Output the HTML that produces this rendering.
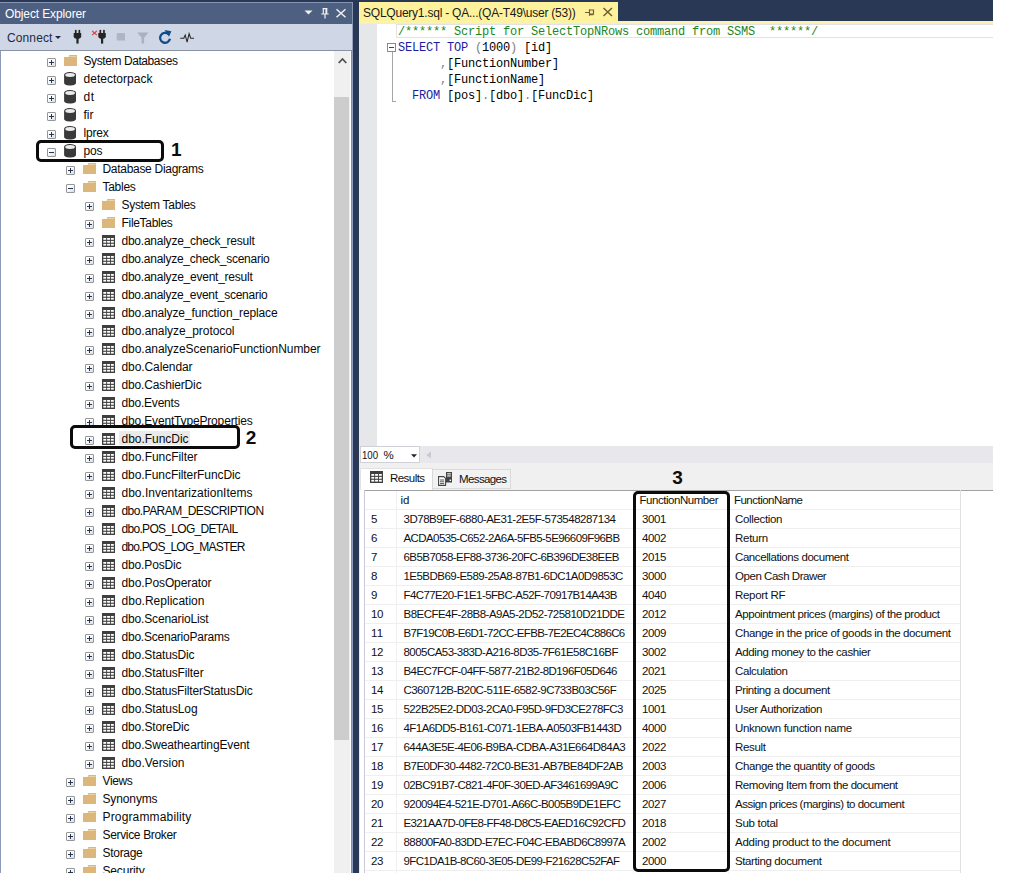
<!DOCTYPE html>
<html><head><meta charset="utf-8"><title>SSMS</title>
<style>
html,body{margin:0;padding:0;background:#fff;}
body{width:1023px;height:873px;position:relative;overflow:hidden;font-family:"Liberation Sans",sans-serif;font-size:12px;color:#000;}
.a{position:absolute;}
.t{position:absolute;white-space:pre;font-size:12px;line-height:17px;height:18px;color:#0a0a0a;}
.g{position:absolute;white-space:pre;font-size:11.5px;line-height:19px;height:19px;color:#111;}
.ex{position:absolute;width:7px;height:7px;border:1px solid #969696;background:linear-gradient(135deg,#ffffff 30%,#d9dde8 100%);border-radius:1px;}
.ex i{position:absolute;left:1px;top:3px;width:5px;height:1px;background:#24364f;}
.ex b{position:absolute;left:3px;top:1px;width:1px;height:5px;background:#24364f;}
.hl{position:absolute;height:1px;background:#efefef;}
.vl{position:absolute;width:1px;background:#efefef;}
.box{position:absolute;border:3px solid #0b0b0b;border-radius:5px;box-sizing:border-box;}
.num{position:absolute;font-weight:bold;font-size:19px;line-height:19px;color:#0c0c0c;}
.code{position:absolute;white-space:pre;font-family:"Liberation Mono",monospace;font-size:12px;line-height:16px;letter-spacing:-0.2px;color:#000;}
.kw{color:#1c1ca0;} .cm{color:#1c871c;} .gy{color:#808080;}
</style></head><body>
<svg width="0" height="0" style="position:absolute">
<defs>
<symbol id="folder" viewBox="0 0 13 11"><path d="M5.4 0H13V11H0V2H4.6z" fill="#dcb67a"/><path d="M5.8 0.9H12.3V2H5.2z" fill="#ecd3a4"/></symbol>
<symbol id="db" viewBox="0 0 12.2 13.8"><path d="M0.1 3C0.1 1.2 2.8 0.1 6.1 0.1S12.1 1.2 12.1 3V10.8C12.1 12.6 9.4 13.7 6.1 13.7S0.1 12.6 0.1 10.8z" fill="#3a3a3a"/><ellipse cx="6.1" cy="3.1" rx="4.9" ry="2" fill="#ececec"/></symbol>
<symbol id="table" viewBox="0 0 13 12"><rect x="0" y="0" width="13" height="12" fill="#3f3f3f"/><g fill="#fff"><rect x="1.3" y="3" width="2.9" height="1.8"/><rect x="5.1" y="3" width="2.9" height="1.8"/><rect x="8.9" y="3" width="2.9" height="1.8"/><rect x="1.3" y="5.9" width="2.9" height="1.8"/><rect x="5.1" y="5.9" width="2.9" height="1.8"/><rect x="8.9" y="5.9" width="2.9" height="1.8"/><rect x="1.3" y="8.8" width="2.9" height="1.8"/><rect x="5.1" y="8.8" width="2.9" height="1.8"/><rect x="8.9" y="8.8" width="2.9" height="1.8"/></g></symbol>
</defs></svg>

<div class="a" style="left:0;top:0;width:993px;height:21px;background:#293955"></div>
<div class="a" style="left:353px;top:0;width:6px;height:873px;background:#293955"></div>
<div class="a" style="left:0;top:2px;width:353px;height:22px;background:#4d6082;border-top:1px solid #8795b5;border-right:1px solid #8795b5;box-sizing:border-box"></div>
<div class="a" style="left:5px;top:5px;height:18px;line-height:18px;font-size:12px;color:#fff;white-space:pre"><span style="letter-spacing:-0.114px;">Object Explorer</span></div>
<svg class="a" style="left:300px;top:4px" width="52" height="18" viewBox="0 0 52 18"><path d="M4.5 6.5h8l-4 4z" fill="#f0f0f0"/><g stroke="#f0f0f0" fill="none" stroke-width="1.2"><path d="M22.6 4.6h4.8M23.3 4.6v5.4M26.7 4.6v5.4M26 4.6v5.4M21.3 10h7.4M25 10v4.5"/><path d="M36.5 5.2l9 8M45.5 5.2l-9 8" stroke-width="1.5"/></g></svg>
<div class="a" style="left:0;top:24px;width:353px;height:26px;background:#cfd6e5;border-right:1px solid #96a3c0;box-sizing:border-box"></div>
<div class="a" style="left:0;top:50px;width:353px;height:1px;background:#8a93a3"></div>
<div class="a" style="left:7px;top:29px;height:18px;line-height:18px;font-size:12px;color:#1e2a44;white-space:pre"><span style="letter-spacing:0.114px;">Connect</span></div>
<svg class="a" style="left:52px;top:26px" width="150" height="24" viewBox="0 0 150 24">
<path d="M3 10h6l-3 3z" fill="#1e2a44"/>
<g fill="#242424"><rect x="22.9" y="3.9" width="1.7" height="4"/><rect x="26.5" y="3.9" width="1.7" height="4"/><path d="M21.7 7h7.5v3.2q0 2.3-2.4 2.6h-2.7q-2.4-.3-2.4-2.6z"/><rect x="24.4" y="12" width="2.2" height="5.6"/></g>
<g fill="#242424"><rect x="47.5" y="3.9" width="1.7" height="4"/><rect x="51.1" y="3.9" width="1.7" height="4"/><path d="M46.3 7h7.5v3.2q0 2.3-2.4 2.6h-2.7q-2.4-.3-2.4-2.6z"/><rect x="49" y="12" width="2.2" height="5.6"/></g>
<path d="M40.2 4.8l4.6 4.4M44.8 4.8l-4.6 4.4" stroke="#d93a3a" stroke-width="1.1"/>
<rect x="64.7" y="7.1" width="8.3" height="7.4" fill="#aeb5c4"/>
<path d="M85.2 6.5h11.3l-4.4 5.2v5.8h-2.5v-5.8z" fill="#aab1c0"/>
<path d="M116.6 8.2a5 5 0 1 0 1.4 4.6" fill="none" stroke="#0f4d8a" stroke-width="2.3"/><path d="M112.6 4l6.8 1.2-2.4 5.6z" fill="#0f4d8a"/>
<path d="M128.2 12.3h3.6l1.4-3.2 1.9 7 2-8.4 1.6 4.6h3.3" fill="none" stroke="#2b2b2b" stroke-width="1.1"/>
</svg>
<div class="a" style="left:0;top:51px;width:351px;height:822px;background:#fff;border-left:1px solid #8e9bbc;box-sizing:border-box"></div><div class="a" style="left:351px;top:51px;width:1px;height:822px;background:#858b9c"></div><div class="a" style="left:352px;top:51px;width:1px;height:822px;background:#8fa0c2"></div>
<div class="a" style="left:334px;top:51px;width:16px;height:822px;background:#f0f0f0"></div>
<div class="a" style="left:334px;top:97px;width:15px;height:643px;background:#cdcdcd"></div>
<svg class="a" style="left:333.5px;top:50px" width="17" height="20" viewBox="0 0 17 20"><path d="M4.7 13l3.8-4 3.8 4" fill="none" stroke="#505050" stroke-width="1.8"/></svg>
<div class="ex" style="left:47px;top:58px"><i></i><b></b></div>
<svg class="a" style="left:63.5px;top:55px" width="13" height="11"><use href="#folder"/></svg>
<div class="t" style="left:83.5px;top:53px"><span style="letter-spacing:-0.420px;">System Databases</span></div>
<div class="ex" style="left:47px;top:76px"><i></i><b></b></div>
<svg class="a" style="left:63.8px;top:71.9px" width="12.2" height="13.8"><use href="#db"/></svg>
<div class="t" style="left:83.5px;top:71px"><span style="letter-spacing:0.023px;">detectorpack</span></div>
<div class="ex" style="left:47px;top:94px"><i></i><b></b></div>
<svg class="a" style="left:63.8px;top:89.9px" width="12.2" height="13.8"><use href="#db"/></svg>
<div class="t" style="left:83.5px;top:89px"><span style="letter-spacing:0.492px;">dt</span></div>
<div class="ex" style="left:47px;top:112px"><i></i><b></b></div>
<svg class="a" style="left:63.8px;top:107.9px" width="12.2" height="13.8"><use href="#db"/></svg>
<div class="t" style="left:83.5px;top:107px"><span style="letter-spacing:0.000px;">fir</span></div>
<div class="ex" style="left:47px;top:130px"><i></i><b></b></div>
<svg class="a" style="left:63.8px;top:125.9px" width="12.2" height="13.8"><use href="#db"/></svg>
<div class="t" style="left:83.5px;top:125px"><span style="letter-spacing:-0.203px;">lprex</span></div>
<div class="ex" style="left:47px;top:148px"><i></i></div>
<svg class="a" style="left:63.8px;top:143.9px" width="12.2" height="13.8"><use href="#db"/></svg>
<div class="t" style="left:83.5px;top:143px"><span style="letter-spacing:-0.120px;">pos</span></div>
<div class="ex" style="left:66px;top:166px"><i></i><b></b></div>
<svg class="a" style="left:82.8px;top:163px" width="13" height="11"><use href="#folder"/></svg>
<div class="t" style="left:102.5px;top:161px"><span style="letter-spacing:-0.298px;">Database Diagrams</span></div>
<div class="ex" style="left:66px;top:184px"><i></i></div>
<svg class="a" style="left:82.8px;top:181px" width="13" height="11"><use href="#folder"/></svg>
<div class="t" style="left:102.5px;top:179px"><span style="letter-spacing:-0.281px;">Tables</span></div>
<div class="ex" style="left:85px;top:202px"><i></i><b></b></div>
<svg class="a" style="left:102px;top:199px" width="13" height="11"><use href="#folder"/></svg>
<div class="t" style="left:121.5px;top:197px"><span style="letter-spacing:-0.293px;">System Tables</span></div>
<div class="ex" style="left:85px;top:220px"><i></i><b></b></div>
<svg class="a" style="left:102px;top:217px" width="13" height="11"><use href="#folder"/></svg>
<div class="t" style="left:121.5px;top:215px"><span style="letter-spacing:-0.303px;">FileTables</span></div>
<div class="ex" style="left:85px;top:238px"><i></i><b></b></div>
<svg class="a" style="left:102px;top:235px" width="13" height="12"><use href="#table"/></svg>
<div class="t" style="left:121.5px;top:233px"><span style="letter-spacing:-0.240px;">dbo.analyze_check_result</span></div>
<div class="ex" style="left:85px;top:256px"><i></i><b></b></div>
<svg class="a" style="left:102px;top:253px" width="13" height="12"><use href="#table"/></svg>
<div class="t" style="left:121.5px;top:251px"><span style="letter-spacing:-0.261px;">dbo.analyze_check_scenario</span></div>
<div class="ex" style="left:85px;top:274px"><i></i><b></b></div>
<svg class="a" style="left:102px;top:271px" width="13" height="12"><use href="#table"/></svg>
<div class="t" style="left:121.5px;top:269px"><span style="letter-spacing:-0.240px;">dbo.analyze_event_result</span></div>
<div class="ex" style="left:85px;top:292px"><i></i><b></b></div>
<svg class="a" style="left:102px;top:289px" width="13" height="12"><use href="#table"/></svg>
<div class="t" style="left:121.5px;top:287px"><span style="letter-spacing:-0.261px;">dbo.analyze_event_scenario</span></div>
<div class="ex" style="left:85px;top:310px"><i></i><b></b></div>
<svg class="a" style="left:102px;top:307px" width="13" height="12"><use href="#table"/></svg>
<div class="t" style="left:121.5px;top:305px"><span style="letter-spacing:-0.123px;">dbo.analyze_function_replace</span></div>
<div class="ex" style="left:85px;top:328px"><i></i><b></b></div>
<svg class="a" style="left:102px;top:325px" width="13" height="12"><use href="#table"/></svg>
<div class="t" style="left:121.5px;top:323px"><span style="letter-spacing:-0.055px;">dbo.analyze_protocol</span></div>
<div class="ex" style="left:85px;top:346px"><i></i><b></b></div>
<svg class="a" style="left:102px;top:343px" width="13" height="12"><use href="#table"/></svg>
<div class="t" style="left:121.5px;top:341px"><span style="letter-spacing:-0.054px;">dbo.analyzeScenarioFunctionNumber</span></div>
<div class="ex" style="left:85px;top:364px"><i></i><b></b></div>
<svg class="a" style="left:102px;top:361px" width="13" height="12"><use href="#table"/></svg>
<div class="t" style="left:121.5px;top:359px"><span style="letter-spacing:-0.089px;">dbo.Calendar</span></div>
<div class="ex" style="left:85px;top:382px"><i></i><b></b></div>
<svg class="a" style="left:102px;top:379px" width="13" height="12"><use href="#table"/></svg>
<div class="t" style="left:121.5px;top:377px"><span style="letter-spacing:-0.146px;">dbo.CashierDic</span></div>
<div class="ex" style="left:85px;top:400px"><i></i><b></b></div>
<svg class="a" style="left:102px;top:397px" width="13" height="12"><use href="#table"/></svg>
<div class="t" style="left:121.5px;top:395px"><span style="letter-spacing:-0.205px;">dbo.Events</span></div>
<div class="ex" style="left:85px;top:418px"><i></i><b></b></div>
<svg class="a" style="left:102px;top:415px" width="13" height="12"><use href="#table"/></svg>
<div class="t" style="left:121.5px;top:413px"><span style="letter-spacing:-0.163px;">dbo.EventTypeProperties</span></div>
<div class="a" style="left:119px;top:430.5px;width:70.5px;height:14.5px;background:#eaeaea"></div>
<div class="ex" style="left:85px;top:436px"><i></i><b></b></div>
<svg class="a" style="left:102px;top:433px" width="13" height="12"><use href="#table"/></svg>
<div class="t" style="left:121.5px;top:431px"><span style="letter-spacing:-0.034px;">dbo.FuncDic</span></div>
<div class="ex" style="left:85px;top:454px"><i></i><b></b></div>
<svg class="a" style="left:102px;top:451px" width="13" height="12"><use href="#table"/></svg>
<div class="t" style="left:121.5px;top:449px"><span style="letter-spacing:-0.050px;">dbo.FuncFilter</span></div>
<div class="ex" style="left:85px;top:472px"><i></i><b></b></div>
<svg class="a" style="left:102px;top:469px" width="13" height="12"><use href="#table"/></svg>
<div class="t" style="left:121.5px;top:467px"><span style="letter-spacing:-0.082px;">dbo.FuncFilterFuncDic</span></div>
<div class="ex" style="left:85px;top:490px"><i></i><b></b></div>
<svg class="a" style="left:102px;top:487px" width="13" height="12"><use href="#table"/></svg>
<div class="t" style="left:121.5px;top:485px"><span style="letter-spacing:0.010px;">dbo.InventarizationItems</span></div>
<div class="ex" style="left:85px;top:508px"><i></i><b></b></div>
<svg class="a" style="left:102px;top:505px" width="13" height="12"><use href="#table"/></svg>
<div class="t" style="left:121.5px;top:503px"><span style="letter-spacing:-0.563px;">dbo.PARAM_DESCRIPTION</span></div>
<div class="ex" style="left:85px;top:526px"><i></i><b></b></div>
<svg class="a" style="left:102px;top:523px" width="13" height="12"><use href="#table"/></svg>
<div class="t" style="left:121.5px;top:521px"><span style="letter-spacing:-0.695px;">dbo.POS_LOG_DETAIL</span></div>
<div class="ex" style="left:85px;top:544px"><i></i><b></b></div>
<svg class="a" style="left:102px;top:541px" width="13" height="12"><use href="#table"/></svg>
<div class="t" style="left:121.5px;top:539px"><span style="letter-spacing:-0.799px;">dbo.POS_LOG_MASTER</span></div>
<div class="ex" style="left:85px;top:562px"><i></i><b></b></div>
<svg class="a" style="left:102px;top:559px" width="13" height="12"><use href="#table"/></svg>
<div class="t" style="left:121.5px;top:557px"><span style="letter-spacing:-0.138px;">dbo.PosDic</span></div>
<div class="ex" style="left:85px;top:580px"><i></i><b></b></div>
<svg class="a" style="left:102px;top:577px" width="13" height="12"><use href="#table"/></svg>
<div class="t" style="left:121.5px;top:575px"><span style="letter-spacing:-0.093px;">dbo.PosOperator</span></div>
<div class="ex" style="left:85px;top:598px"><i></i><b></b></div>
<svg class="a" style="left:102px;top:595px" width="13" height="12"><use href="#table"/></svg>
<div class="t" style="left:121.5px;top:593px"><span style="letter-spacing:0.018px;">dbo.Replication</span></div>
<div class="ex" style="left:85px;top:616px"><i></i><b></b></div>
<svg class="a" style="left:102px;top:613px" width="13" height="12"><use href="#table"/></svg>
<div class="t" style="left:121.5px;top:611px"><span style="letter-spacing:-0.149px;">dbo.ScenarioList</span></div>
<div class="ex" style="left:85px;top:634px"><i></i><b></b></div>
<svg class="a" style="left:102px;top:631px" width="13" height="12"><use href="#table"/></svg>
<div class="t" style="left:121.5px;top:629px"><span style="letter-spacing:-0.226px;">dbo.ScenarioParams</span></div>
<div class="ex" style="left:85px;top:652px"><i></i><b></b></div>
<svg class="a" style="left:102px;top:649px" width="13" height="12"><use href="#table"/></svg>
<div class="t" style="left:121.5px;top:647px"><span style="letter-spacing:-0.132px;">dbo.StatusDic</span></div>
<div class="ex" style="left:85px;top:670px"><i></i><b></b></div>
<svg class="a" style="left:102px;top:667px" width="13" height="12"><use href="#table"/></svg>
<div class="t" style="left:121.5px;top:665px"><span style="letter-spacing:-0.128px;">dbo.StatusFilter</span></div>
<div class="ex" style="left:85px;top:688px"><i></i><b></b></div>
<svg class="a" style="left:102px;top:685px" width="13" height="12"><use href="#table"/></svg>
<div class="t" style="left:121.5px;top:683px"><span style="letter-spacing:-0.176px;">dbo.StatusFilterStatusDic</span></div>
<div class="ex" style="left:85px;top:706px"><i></i><b></b></div>
<svg class="a" style="left:102px;top:703px" width="13" height="12"><use href="#table"/></svg>
<div class="t" style="left:121.5px;top:701px"><span style="letter-spacing:-0.108px;">dbo.StatusLog</span></div>
<div class="ex" style="left:85px;top:724px"><i></i><b></b></div>
<svg class="a" style="left:102px;top:721px" width="13" height="12"><use href="#table"/></svg>
<div class="t" style="left:121.5px;top:719px"><span style="letter-spacing:-0.115px;">dbo.StoreDic</span></div>
<div class="ex" style="left:85px;top:742px"><i></i><b></b></div>
<svg class="a" style="left:102px;top:739px" width="13" height="12"><use href="#table"/></svg>
<div class="t" style="left:121.5px;top:737px"><span style="letter-spacing:-0.126px;">dbo.SweatheartingEvent</span></div>
<div class="ex" style="left:85px;top:760px"><i></i><b></b></div>
<svg class="a" style="left:102px;top:757px" width="13" height="12"><use href="#table"/></svg>
<div class="t" style="left:121.5px;top:755px"><span style="letter-spacing:-0.036px;">dbo.Version</span></div>
<div class="ex" style="left:66px;top:778px"><i></i><b></b></div>
<svg class="a" style="left:82.8px;top:775px" width="13" height="11"><use href="#folder"/></svg>
<div class="t" style="left:102.5px;top:773px"><span style="letter-spacing:-0.359px;">Views</span></div>
<div class="ex" style="left:66px;top:796px"><i></i><b></b></div>
<svg class="a" style="left:82.8px;top:793px" width="13" height="11"><use href="#folder"/></svg>
<div class="t" style="left:102.5px;top:791px"><span style="letter-spacing:-0.129px;">Synonyms</span></div>
<div class="ex" style="left:66px;top:814px"><i></i><b></b></div>
<svg class="a" style="left:82.8px;top:811px" width="13" height="11"><use href="#folder"/></svg>
<div class="t" style="left:102.5px;top:809px"><span style="letter-spacing:0.153px;">Programmability</span></div>
<div class="ex" style="left:66px;top:832px"><i></i><b></b></div>
<svg class="a" style="left:82.8px;top:829px" width="13" height="11"><use href="#folder"/></svg>
<div class="t" style="left:102.5px;top:827px"><span style="letter-spacing:-0.336px;">Service Broker</span></div>
<div class="ex" style="left:66px;top:850px"><i></i><b></b></div>
<svg class="a" style="left:82.8px;top:847px" width="13" height="11"><use href="#folder"/></svg>
<div class="t" style="left:102.5px;top:845px"><span style="letter-spacing:-0.290px;">Storage</span></div>
<div class="ex" style="left:66px;top:868px"><i></i><b></b></div>
<svg class="a" style="left:82.8px;top:865px" width="13" height="11"><use href="#folder"/></svg>
<div class="t" style="left:102.5px;top:863px"><span style="letter-spacing:-0.170px;">Security</span></div>
<div class="box" style="left:36px;top:139.5px;width:128px;height:22px"></div>
<div class="num" style="left:171px;top:140px">1</div>
<div class="box" style="left:70px;top:425px;width:170px;height:23.5px"></div>
<div class="num" style="left:245.7px;top:427.5px">2</div>
<div class="a" style="left:359px;top:2px;width:259px;height:20px;background:#fff29d"></div>
<div class="a" style="left:359px;top:21px;width:634px;height:3px;background:linear-gradient(#fff29d,#fbf1b4 60%,#f3ebc8)"></div>
<div class="a" style="left:363px;top:4px;height:18px;line-height:18px;font-size:12px;color:#1a1a1a;white-space:pre"><span style="letter-spacing:-0.228px;">SQLQuery1.sql - QA...(QA-T49\user (53))</span></div>
<svg class="a" style="left:583px;top:4px" width="34" height="16" viewBox="0 0 34 16"><g stroke="#6b6132" fill="none" stroke-width="1.2"><path d="M2 8.5h4M6.5 5.2v6.6M6.5 6h4v4h-4M6.5 10.6h4"/><path d="M20.5 4l8.5 8M29 4l-8.5 8" stroke-width="1.5"/></g></svg>
<div class="a" style="left:359px;top:24px;width:634px;height:422px;background:#fff"></div>
<div class="a" style="left:359px;top:24px;width:18px;height:422px;background:#e6e7e8"></div>
<div class="a" style="left:396px;top:24px;width:597px;height:14px;border:1px solid #e3e3e3;border-right:none;box-sizing:border-box"></div>
<div class="a" style="left:387px;top:43px;width:7px;height:7px;border:1px solid #8a8a8a;background:#fff"><div class="a" style="left:1px;top:3px;width:5px;height:1px;background:#444"></div></div>
<div class="a" style="left:392px;top:52px;width:1px;height:50px;background:#a5a5a5"></div>
<div class="a" style="left:392px;top:101px;width:4px;height:1px;background:#a5a5a5"></div>
<div class="code" style="left:398px;top:24px"><span class="cm">/****** Script for SelectTopNRows command from SSMS  ******/</span></div>
<div class="code" style="left:398px;top:40px"><span class="kw">SELECT</span> <span class="kw">TOP</span> <span class="gy">(</span>1000<span class="gy">)</span> [id]</div>
<div class="code" style="left:398px;top:56px">      <span class="gy">,</span>[FunctionNumber]</div>
<div class="code" style="left:398px;top:72px">      <span class="gy">,</span>[FunctionName]</div>
<div class="code" style="left:398px;top:88px">  <span class="kw">FROM</span> [pos]<span class="gy">.</span>[dbo]<span class="gy">.</span>[FuncDic]</div>
<div class="a" style="left:359px;top:446px;width:634px;height:17px;background:#e8e8ec"></div>
<div class="a" style="left:360px;top:446px;width:60px;height:17px;background:#fff;border:1px solid #d0d0d6;box-sizing:border-box"></div>
<div class="a" style="left:362.3px;top:446px;height:17px;line-height:18px;font-size:11.5px;color:#111;white-space:pre;transform:scaleX(0.84);transform-origin:0 0">100</div>
<div class="a" style="left:383.5px;top:446px;height:17px;line-height:18px;font-size:11.5px;color:#111;white-space:pre">%</div>
<svg class="a" style="left:409px;top:450px" width="30" height="12" viewBox="0 0 30 12"><path d="M2 4.3h6l-3 3.2z" fill="#222"/><path d="M22 1.5v7l-4.6-3.5z" fill="#c9c9ce"/></svg>
<div class="a" style="left:359px;top:463px;width:634px;height:27px;background:#f0f0f0"></div>
<div class="a" style="left:360px;top:467.5px;width:73px;height:22px;background:#fff;border-right:1px solid #d9d9d9;border-top:1px solid #e2e2e2;border-left:1px solid #e2e2e2;box-sizing:border-box"></div>
<div class="a" style="left:433px;top:469px;width:78px;height:20px;background:#f2f2f2;border:1px solid #dadada;border-left:none;box-sizing:border-box"></div>
<svg class="a" style="left:370px;top:471px" width="13" height="12"><use href="#table"/></svg>
<div class="g" style="left:390px;top:469px;line-height:19px;color:#111"><span style="letter-spacing:-0.551px;">Results</span></div>
<svg class="a" style="left:438px;top:472px" width="15" height="14" viewBox="0 0 15 14"><rect x="8" y="0" width="6" height="10.5" fill="#444"/><rect x="9.2" y="1.3" width="3.6" height="1.1" fill="#fff"/><rect x="9.2" y="3.4" width="3.6" height="1.1" fill="#fff"/><rect x="11.6" y="7.6" width="1.4" height="1.4" fill="#fff"/><path d="M0.6 4.6h5.2l1.8 1.8v7H0.6z" fill="#fff" stroke="#444" stroke-width="1.1"/><path d="M2 8h4.2M2 9.8h4.2M2 11.6h4.2" stroke="#444" stroke-width="0.9"/></svg>
<div class="g" style="left:459px;top:470px;line-height:19px;color:#111"><span style="letter-spacing:-0.615px;">Messages</span></div>
<div class="num" style="left:672.3px;top:467.7px">3</div>
<div class="a" style="left:359px;top:490px;width:634px;height:383px;background:#fff"></div>
<div class="a" style="left:364px;top:489.5px;width:629px;height:1px;background:#a2a2a2"></div>
<div class="a" style="left:364px;top:490px;width:1px;height:383px;background:#c8cbd6"></div>
<div class="vl" style="left:396px;top:491px;height:382px"></div>
<div class="vl" style="left:633px;top:491px;height:382px"></div>
<div class="vl" style="left:728px;top:491px;height:382px"></div>
<div class="a" style="left:960px;top:490px;width:1px;height:383px;background:#e0e0e0"></div>
<div class="a" style="left:359px;top:24px;width:1px;height:849px;background:#e3e9f5"></div>
<div class="hl" style="left:365px;top:509px;width:595px"></div>
<div class="hl" style="left:365px;top:528px;width:595px"></div>
<div class="hl" style="left:365px;top:547px;width:595px"></div>
<div class="hl" style="left:365px;top:566px;width:595px"></div>
<div class="hl" style="left:365px;top:585px;width:595px"></div>
<div class="hl" style="left:365px;top:604px;width:595px"></div>
<div class="hl" style="left:365px;top:623px;width:595px"></div>
<div class="hl" style="left:365px;top:642px;width:595px"></div>
<div class="hl" style="left:365px;top:661px;width:595px"></div>
<div class="hl" style="left:365px;top:680px;width:595px"></div>
<div class="hl" style="left:365px;top:699px;width:595px"></div>
<div class="hl" style="left:365px;top:718px;width:595px"></div>
<div class="hl" style="left:365px;top:737px;width:595px"></div>
<div class="hl" style="left:365px;top:756px;width:595px"></div>
<div class="hl" style="left:365px;top:775px;width:595px"></div>
<div class="hl" style="left:365px;top:794px;width:595px"></div>
<div class="hl" style="left:365px;top:813px;width:595px"></div>
<div class="hl" style="left:365px;top:832px;width:595px"></div>
<div class="hl" style="left:365px;top:851px;width:595px"></div>
<div class="hl" style="left:365px;top:870px;width:595px"></div>
<div class="g" style="left:400.5px;top:491px"><span style="letter-spacing:0.023px;">id</span></div>
<div class="g" style="left:639.5px;top:491px"><span style="letter-spacing:-0.465px;">FunctionNumber</span></div>
<div class="g" style="left:734px;top:491px"><span style="letter-spacing:-0.525px;">FunctionName</span></div>
<div class="g" style="left:371px;top:509.5px"><span style="letter-spacing:-0.206px;">5</span></div>
<div class="g" style="left:403.5px;top:509.5px"><span style="letter-spacing:-0.487px;">3D78B9EF-6880-AE31-2E5F-573548287134</span></div>
<div class="g" style="left:642px;top:509.5px"><span style="letter-spacing:-0.398px;">3001</span></div>
<div class="g" style="left:735px;top:509.5px"><span style="letter-spacing:-0.340px;">Collection</span></div>
<div class="g" style="left:371px;top:528.5px"><span style="letter-spacing:-0.206px;">6</span></div>
<div class="g" style="left:403.5px;top:528.5px"><span style="letter-spacing:-0.588px;">ACDA0535-C652-2A6A-5FB5-5E96609F96BB</span></div>
<div class="g" style="left:642px;top:528.5px"><span style="letter-spacing:-0.398px;">4002</span></div>
<div class="g" style="left:735px;top:528.5px"><span style="letter-spacing:-0.272px;">Return</span></div>
<div class="g" style="left:371px;top:547.5px"><span style="letter-spacing:-0.206px;">7</span></div>
<div class="g" style="left:403.5px;top:547.5px"><span style="letter-spacing:-0.552px;">6B5B7058-EF88-3736-20FC-6B396DE38EEB</span></div>
<div class="g" style="left:642px;top:547.5px"><span style="letter-spacing:-0.398px;">2015</span></div>
<div class="g" style="left:735px;top:547.5px"><span style="letter-spacing:-0.416px;">Cancellations document</span></div>
<div class="g" style="left:371px;top:566.5px"><span style="letter-spacing:-0.206px;">8</span></div>
<div class="g" style="left:403.5px;top:566.5px"><span style="letter-spacing:-0.532px;">1E5BDB69-E589-25A8-87B1-6DC1A0D9853C</span></div>
<div class="g" style="left:642px;top:566.5px"><span style="letter-spacing:-0.398px;">3000</span></div>
<div class="g" style="left:735px;top:566.5px"><span style="letter-spacing:-0.452px;">Open Cash Drawer</span></div>
<div class="g" style="left:371px;top:585.5px"><span style="letter-spacing:-0.206px;">9</span></div>
<div class="g" style="left:403.5px;top:585.5px"><span style="letter-spacing:-0.607px;">F4C77E20-F1E1-5FBC-A52F-70917B14A43B</span></div>
<div class="g" style="left:642px;top:585.5px"><span style="letter-spacing:-0.398px;">4040</span></div>
<div class="g" style="left:735px;top:585.5px"><span style="letter-spacing:-0.305px;">Report RF</span></div>
<div class="g" style="left:371px;top:604.5px"><span style="letter-spacing:-0.298px;">10</span></div>
<div class="g" style="left:403.5px;top:604.5px"><span style="letter-spacing:-0.520px;">B8ECFE4F-28B8-A9A5-2D52-725810D21DDE</span></div>
<div class="g" style="left:642px;top:604.5px"><span style="letter-spacing:-0.398px;">2012</span></div>
<div class="g" style="left:735px;top:604.5px"><span style="letter-spacing:-0.445px;">Appointment prices (margins) of the product</span></div>
<div class="g" style="left:371px;top:623.5px"><span style="letter-spacing:0.123px;">11</span></div>
<div class="g" style="left:403.5px;top:623.5px"><span style="letter-spacing:-0.661px;">B7F19C0B-E6D1-72CC-EFBB-7E2EC4C886C6</span></div>
<div class="g" style="left:642px;top:623.5px"><span style="letter-spacing:-0.398px;">2009</span></div>
<div class="g" style="left:735px;top:623.5px"><span style="letter-spacing:-0.375px;">Change in the price of goods in the document</span></div>
<div class="g" style="left:371px;top:642.5px"><span style="letter-spacing:-0.298px;">12</span></div>
<div class="g" style="left:403.5px;top:642.5px"><span style="letter-spacing:-0.544px;">8005CA53-383D-A216-8D35-7F61E58C16BF</span></div>
<div class="g" style="left:642px;top:642.5px"><span style="letter-spacing:-0.398px;">3002</span></div>
<div class="g" style="left:735px;top:642.5px"><span style="letter-spacing:-0.384px;">Adding money to the cashier</span></div>
<div class="g" style="left:371px;top:661.5px"><span style="letter-spacing:-0.298px;">13</span></div>
<div class="g" style="left:403.5px;top:661.5px"><span style="letter-spacing:-0.589px;">B4EC7FCF-04FF-5877-21B2-8D196F05D646</span></div>
<div class="g" style="left:642px;top:661.5px"><span style="letter-spacing:-0.398px;">2021</span></div>
<div class="g" style="left:735px;top:661.5px"><span style="letter-spacing:-0.391px;">Calculation</span></div>
<div class="g" style="left:371px;top:680.5px"><span style="letter-spacing:-0.298px;">14</span></div>
<div class="g" style="left:403.5px;top:680.5px"><span style="letter-spacing:-0.550px;">C360712B-B20C-511E-6582-9C733B03C56F</span></div>
<div class="g" style="left:642px;top:680.5px"><span style="letter-spacing:-0.398px;">2025</span></div>
<div class="g" style="left:735px;top:680.5px"><span style="letter-spacing:-0.395px;">Printing a document</span></div>
<div class="g" style="left:371px;top:699.5px"><span style="letter-spacing:-0.298px;">15</span></div>
<div class="g" style="left:403.5px;top:699.5px"><span style="letter-spacing:-0.585px;">522B25E2-DD03-2CA0-F95D-9FD3CE278FC3</span></div>
<div class="g" style="left:642px;top:699.5px"><span style="letter-spacing:-0.398px;">1001</span></div>
<div class="g" style="left:735px;top:699.5px"><span style="letter-spacing:-0.393px;">User Authorization</span></div>
<div class="g" style="left:371px;top:718.5px"><span style="letter-spacing:-0.298px;">16</span></div>
<div class="g" style="left:403.5px;top:718.5px"><span style="letter-spacing:-0.559px;">4F1A6DD5-B161-C071-1EBA-A0503FB1443D</span></div>
<div class="g" style="left:642px;top:718.5px"><span style="letter-spacing:-0.398px;">4000</span></div>
<div class="g" style="left:735px;top:718.5px"><span style="letter-spacing:-0.314px;">Unknown function name</span></div>
<div class="g" style="left:371px;top:737.5px"><span style="letter-spacing:-0.298px;">17</span></div>
<div class="g" style="left:403.5px;top:737.5px"><span style="letter-spacing:-0.537px;">644A3E5E-4E06-B9BA-CDBA-A31E664D84A3</span></div>
<div class="g" style="left:642px;top:737.5px"><span style="letter-spacing:-0.398px;">2022</span></div>
<div class="g" style="left:735px;top:737.5px"><span style="letter-spacing:-0.335px;">Result</span></div>
<div class="g" style="left:371px;top:756.5px"><span style="letter-spacing:-0.298px;">18</span></div>
<div class="g" style="left:403.5px;top:756.5px"><span style="letter-spacing:-0.567px;">B7E0DF30-4482-72C0-BE31-AB7BE84DF2AB</span></div>
<div class="g" style="left:642px;top:756.5px"><span style="letter-spacing:-0.398px;">2003</span></div>
<div class="g" style="left:735px;top:756.5px"><span style="letter-spacing:-0.381px;">Change the quantity of goods</span></div>
<div class="g" style="left:371px;top:775.5px"><span style="letter-spacing:-0.298px;">19</span></div>
<div class="g" style="left:403.5px;top:775.5px"><span style="letter-spacing:-0.597px;">02BC91B7-C821-4F0F-30ED-AF3461699A9C</span></div>
<div class="g" style="left:642px;top:775.5px"><span style="letter-spacing:-0.398px;">2006</span></div>
<div class="g" style="left:735px;top:775.5px"><span style="letter-spacing:-0.446px;">Removing Item from the document</span></div>
<div class="g" style="left:371px;top:794.5px"><span style="letter-spacing:-0.298px;">20</span></div>
<div class="g" style="left:403.5px;top:794.5px"><span style="letter-spacing:-0.560px;">920094E4-521E-D701-A66C-B005B9DE1EFC</span></div>
<div class="g" style="left:642px;top:794.5px"><span style="letter-spacing:-0.398px;">2027</span></div>
<div class="g" style="left:735px;top:794.5px"><span style="letter-spacing:-0.498px;">Assign prices (margins) to document</span></div>
<div class="g" style="left:371px;top:813.5px"><span style="letter-spacing:-0.298px;">21</span></div>
<div class="g" style="left:403.5px;top:813.5px"><span style="letter-spacing:-0.642px;">E321AA7D-0FE8-FF48-D8C5-EAED16C92CFD</span></div>
<div class="g" style="left:642px;top:813.5px"><span style="letter-spacing:-0.398px;">2018</span></div>
<div class="g" style="left:735px;top:813.5px"><span style="letter-spacing:-0.290px;">Sub total</span></div>
<div class="g" style="left:371px;top:832.5px"><span style="letter-spacing:-0.298px;">22</span></div>
<div class="g" style="left:403.5px;top:832.5px"><span style="letter-spacing:-0.571px;">88800FA0-83DD-E7EC-F04C-EBABD6C8997A</span></div>
<div class="g" style="left:642px;top:832.5px"><span style="letter-spacing:-0.398px;">2002</span></div>
<div class="g" style="left:735px;top:832.5px"><span style="letter-spacing:-0.254px;">Adding product to the document</span></div>
<div class="g" style="left:371px;top:851.5px"><span style="letter-spacing:-0.298px;">23</span></div>
<div class="g" style="left:403.5px;top:851.5px"><span style="letter-spacing:-0.605px;">9FC1DA1B-8C60-3E05-DE99-F21628C52FAF</span></div>
<div class="g" style="left:642px;top:851.5px"><span style="letter-spacing:-0.398px;">2000</span></div>
<div class="g" style="left:735px;top:851.5px"><span style="letter-spacing:-0.403px;">Starting document</span></div>
<div class="box" style="left:632.5px;top:490.5px;width:97.5px;height:381px"></div>
</body></html>
